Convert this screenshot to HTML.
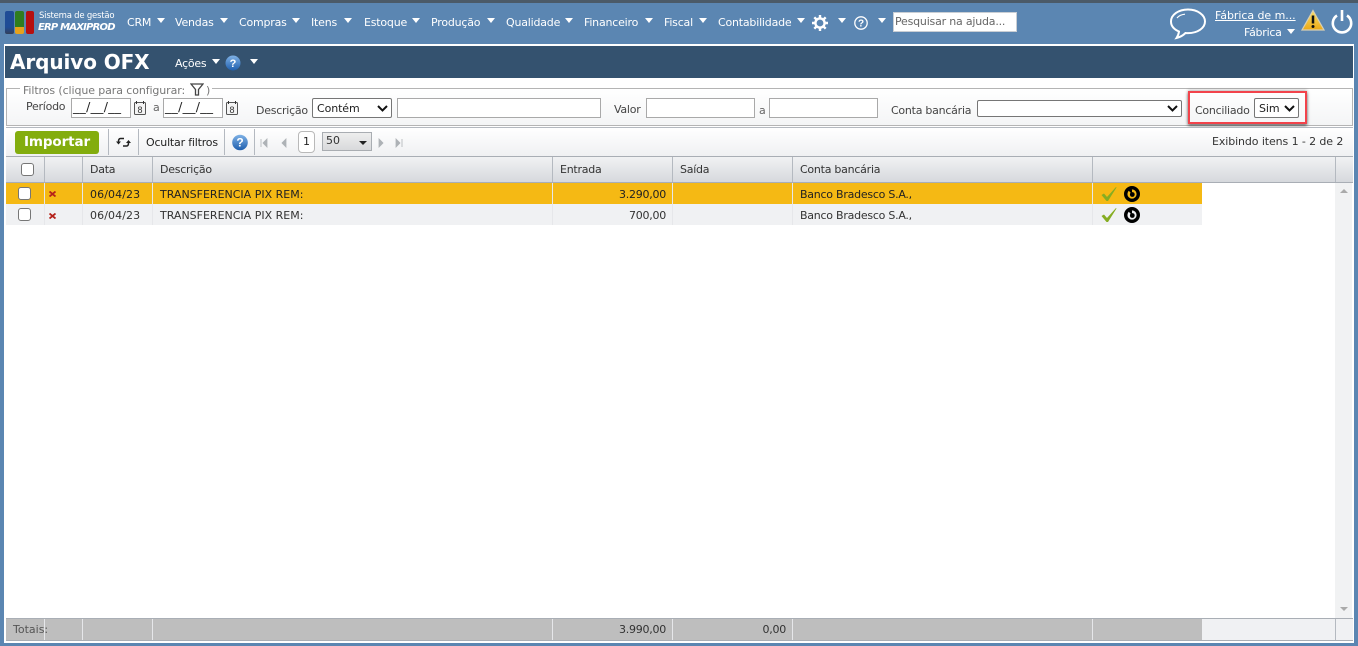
<!DOCTYPE html>
<html lang="pt-BR">
<head>
<meta charset="utf-8">
<title>Arquivo OFX</title>
<style>
html,body{margin:0;padding:0}
body{position:relative;width:1358px;height:646px;overflow:hidden;background:#5b86b2;font-family:"DejaVu Sans","Liberation Sans",sans-serif;font-size:11px;color:#333}
.a{position:absolute}
.t{position:absolute;white-space:nowrap;line-height:14px;letter-spacing:-.25px}
.r{letter-spacing:0;color:#333}
.m{letter-spacing:-.25px;color:#333}
.n{color:#fff;font-size:11px;top:15.500px;letter-spacing:-.2px}
.c{position:absolute;width:0;height:0;border-left:4.500px solid transparent;border-right:4.500px solid transparent;border-top:5px solid #fff}
.box{position:absolute;box-sizing:border-box;background:#fff;border:1px solid #a9a9a9}
.sel{position:absolute;box-sizing:border-box;background:#fff;border:1px solid #767676;border-radius:2px;height:20px;line-height:19px;padding-left:4px;color:#222;letter-spacing:-.1px}
.cb{position:absolute;box-sizing:border-box;width:13px;height:13px;background:#fff;border:1px solid #767676;border-radius:3px}
.v{position:absolute;width:1px;background:#b4b9c0}
.w{position:absolute;width:1px;background:#e6e7ea}
.lab{color:#444}
.d{color:#222;font-size:12.500px;letter-spacing:.3px}
</style>
</head>
<body>
<div class="a" style="left:0;top:0;width:1358px;height:3px;background:#4b5a68"></div>

<!-- logo -->
<div class="a" style="left:5px;top:11px;width:9px;height:23px;background:linear-gradient(#1f4c96 70%,#33405a);border-radius:2px"></div>
<div class="a" style="left:15px;top:11px;width:9px;height:16px;background:#2f7d1e;border-radius:2px 2px 0 0"></div>
<div class="a" style="left:15px;top:27px;width:9px;height:7px;background:#e6a21c;border-radius:0 0 2px 2px"></div>
<div class="a" style="left:26px;top:11px;width:8px;height:23px;background:#b60f0f;border-radius:2px"></div>
<span class="t" style="left:39px;top:8.500px;color:#fff;font-size:8.500px;letter-spacing:-.22px;">Sistema de gestão</span>
<span class="t" style="left:38px;top:21px;color:#fff;font-size:10px;font-style:italic;font-weight:bold;letter-spacing:-.8px;">ERP MAXIPROD</span>

<!-- nav -->
<span class="t n" style="left:127px">CRM</span><i class="c" style="left:157px;top:18px"></i>
<span class="t n" style="left:175px">Vendas</span><i class="c" style="left:220px;top:18px"></i>
<span class="t n" style="left:239px">Compras</span><i class="c" style="left:292px;top:18px"></i>
<span class="t n" style="left:311px">Itens</span><i class="c" style="left:344px;top:18px"></i>
<span class="t n" style="left:364px">Estoque</span><i class="c" style="left:412px;top:18px"></i>
<span class="t n" style="left:431px">Produção</span><i class="c" style="left:487px;top:18px"></i>
<span class="t n" style="left:506px">Qualidade</span><i class="c" style="left:565px;top:18px"></i>
<span class="t n" style="left:584px">Financeiro</span><i class="c" style="left:645px;top:18px"></i>
<span class="t n" style="left:664px">Fiscal</span><i class="c" style="left:699px;top:18px"></i>
<span class="t n" style="left:718px">Contabilidade</span><i class="c" style="left:797px;top:18px"></i>
<svg class="a" style="left:812px;top:15px" width="16" height="16" viewBox="0 0 16 16"><circle cx="8" cy="8" r="4.600" fill="none" stroke="#fff" stroke-width="2.400"/><path d="M8 0v3M8 13v3M0 8h3M13 8h3M2.300 2.300l2.200 2.200M11.500 11.500l2.200 2.200M2.300 13.700l2.200-2.200M11.500 4.500l2.200-2.200" stroke="#fff" stroke-width="2.400"/></svg>
<i class="c" style="left:838px;top:18px"></i>
<svg class="a" style="left:853px;top:15px" width="16" height="16" viewBox="0 0 16 16"><circle cx="8" cy="8" r="6.200" fill="none" stroke="#fff" stroke-width="1.300"/><text x="8" y="11.500" text-anchor="middle" font-size="10" font-weight="bold" fill="#fff" font-family="Liberation Sans">?</text></svg>
<i class="c" style="left:878px;top:18px"></i>
<div class="a" style="left:893px;top:12px;width:124px;height:20px;box-sizing:border-box;background:#fff;border:1px solid #c9ced4"></div>
<span class="t" style="left:895px;top:15px;color:#666;letter-spacing:-.2px">Pesquisar na ajuda...</span>

<!-- right of nav -->
<svg class="a" style="left:1169px;top:7px" width="38" height="34" viewBox="0 0 38 34"><path d="M19 2.500C9.500 2.500 2 7.800 2 14.500c0 4.500 3.300 8 8 10-.3 2.500-1.500 5-2.500 6.500 3.500-.8 6.800-2.800 9-5 .8.100 1.700.100 2.500.100 9.500 0 17-5 17-11.600S28.500 2.500 19 2.500z" fill="none" stroke="#fff" stroke-width="2"/><path d="M8 11c2-2.500 5-3.500 8-3.800" fill="none" stroke="#fff" stroke-width="1.200"/></svg>
<span class="t" style="left:1215px;top:8.500px;color:#fff;text-decoration:underline;letter-spacing:-.05px">Fábrica de m...</span>
<span class="t" style="left:1244px;top:25.500px;color:#fff">Fábrica</span><i class="c" style="left:1287px;top:29px"></i>
<svg class="a" style="left:1301px;top:9px" width="24" height="22" viewBox="0 0 24 22"><defs><linearGradient id="y" x1="0" y1="0" x2="0" y2="1"><stop offset="0" stop-color="#fbe06a"/><stop offset="1" stop-color="#eda916"/></linearGradient></defs><path d="M12 1.500L23 21H1z" fill="url(#y)" stroke="#d8cfb4" stroke-width="1.200"/><path d="M12 6.500v8" stroke="#111" stroke-width="2.500"/><circle cx="12" cy="17.500" r="1.500" fill="#111"/></svg>
<svg class="a" style="left:1330px;top:9px" width="24" height="25" viewBox="0 0 24 25"><path d="M7 6.500a9.200 9.200 0 1 0 10 0" fill="none" stroke="#fff" stroke-width="2.600"/><path d="M12 1v11" stroke="#fff" stroke-width="2.600"/></svg>

<!-- main panel -->
<div class="a" style="left:4px;top:44px;width:1350px;height:599px;background:#fff"></div>
<div class="a" style="left:5px;top:46px;width:1348px;height:32px;background:#34526f"></div>
<span class="t" style="left:10px;top:51px;line-height:22px;color:#fff;font-size:20px;font-weight:bold;letter-spacing:-.1px">Arquivo OFX</span>
<span class="t" style="left:175px;top:56.500px;color:#fff">Ações</span><i class="c" style="left:212px;top:59px"></i>
<svg class="a" style="left:225px;top:55px" width="16" height="16" viewBox="0 0 16 16"><defs><linearGradient id="q" x1="0" y1="0" x2="0" y2="1"><stop offset="0" stop-color="#7fb2e6"/><stop offset="1" stop-color="#1f5fae"/></linearGradient></defs><circle cx="8" cy="8" r="7.500" fill="url(#q)"/><text x="8" y="12" text-anchor="middle" font-size="11" font-weight="bold" fill="#fff" font-family="Liberation Sans">?</text></svg>
<i class="c" style="left:250px;top:59px"></i>

<!-- filters -->
<div class="a" style="left:6px;top:88px;width:1347px;height:38px;box-sizing:border-box;border:1px solid #b4b4b4;background:linear-gradient(#fff,#f4f5f6)"></div>
<div class="a" style="left:20px;top:84px;width:192px;height:10px;background:#fff"></div>
<span class="t" style="left:23px;top:83.500px;color:#777;letter-spacing:-.1px">Filtros (clique para configurar:</span>
<span class="t" style="left:206px;top:83.500px;color:#777">)</span>
<svg class="a" style="left:190px;top:83px" width="14" height="13" viewBox="0 0 14 13"><path d="M1 1h12L8.500 6.500V12h-3V6.500z" fill="none" stroke="#444" stroke-width="1.300"/></svg>
<span class="t lab" style="left:26px;top:100px">Período</span>
<div class="box" style="left:71px;top:98px;width:60px;height:20px"></div><span class="t d" style="left:73px;top:100px">__/__/__</span>
<svg class="a" style="left:133px;top:100px" width="14" height="16" viewBox="0 0 14 16"><rect x="1.500" y="2.500" width="11" height="12" rx="1" fill="#f4f4f4" stroke="#555"/><path d="M3.500 1v3M10.500 1v3" stroke="#333"/><text x="7" y="12.800" text-anchor="middle" font-size="9" fill="#333" font-family="Liberation Sans">8</text></svg>
<span class="t" style="left:153px;top:101px;color:#666">a</span>
<div class="box" style="left:163px;top:98px;width:60px;height:20px"></div><span class="t d" style="left:165px;top:100px">__/__/__</span>
<svg class="a" style="left:225px;top:100px" width="14" height="16" viewBox="0 0 14 16"><rect x="1.500" y="2.500" width="11" height="12" rx="1" fill="#f4f4f4" stroke="#555"/><path d="M3.500 1v3M10.500 1v3" stroke="#333"/><text x="7" y="12.800" text-anchor="middle" font-size="9" fill="#333" font-family="Liberation Sans">8</text></svg>
<span class="t lab" style="left:256px;top:103.500px">Descrição</span>
<div class="sel" style="left:312px;top:98px;width:80px">Contém</div>
<svg class="a" style="left:377px;top:105px" width="11" height="7" viewBox="0 0 11 7"><path d="M1 1l4.500 4.500L10 1" fill="none" stroke="#111" stroke-width="2"/></svg>
<div class="box" style="left:397px;top:98px;width:204px;height:20px"></div>
<span class="t lab" style="left:614px;top:103px">Valor</span>
<div class="box" style="left:646px;top:98px;width:109px;height:20px"></div>
<span class="t" style="left:759px;top:103.500px;color:#666">a</span>
<div class="box" style="left:769px;top:98px;width:109px;height:20px"></div>
<span class="t lab" style="left:891px;top:103.500px">Conta bancária</span>
<div class="sel" style="left:977px;top:100px;width:205px;height:17px"></div>
<svg class="a" style="left:1167px;top:105px" width="11" height="7" viewBox="0 0 11 7"><path d="M1 1l4.500 4.500L10 1" fill="none" stroke="#111" stroke-width="2"/></svg>
<div class="a" style="left:1188px;top:91px;width:119px;height:33px;box-sizing:border-box;border:2.500px solid #f2434b;box-shadow:0 2px 3px rgba(0,0,0,.5),0 -1px 3px rgba(0,0,0,.25)"></div>
<span class="t lab" style="left:1195px;top:103.500px">Conciliado</span>
<div class="sel" style="left:1254px;top:98px;width:45px;height:20px">Sim</div>
<svg class="a" style="left:1284px;top:105px" width="11" height="7" viewBox="0 0 11 7"><path d="M1 1l4.500 4.500L10 1" fill="none" stroke="#111" stroke-width="2"/></svg>

<!-- toolbar -->
<div class="a" style="left:6px;top:127px;width:1347px;height:30px;box-sizing:border-box;border-top:1px solid #b4b9c0;background:linear-gradient(#fff,#eff0f2)"></div>
<div class="a" style="left:15px;top:131px;width:84px;height:23px;background:#83ad0e;border-radius:3px;color:#fff;font-weight:bold;font-size:13.500px;line-height:22px;text-align:center;letter-spacing:-.1px">Importar</div>
<div class="v" style="left:108px;top:129px;height:26px"></div>
<svg class="a" style="left:116px;top:136px" width="15" height="13" viewBox="0 0 15 13"><path d="M8 2.500H4.500C3 2.500 2.500 4 2.500 5.500M7 10h3.500c1.500 0 2-1.500 2-3" fill="none" stroke="#222" stroke-width="1.500"/><path d="M0 5.500h5L2.500 8.500zM10 7h5l-2.500-3z" fill="#222"/></svg>
<div class="v" style="left:138px;top:129px;height:26px"></div>
<span class="t" style="left:146px;top:135.500px;color:#222;letter-spacing:-.2px">Ocultar filtros</span>
<div class="v" style="left:224px;top:129px;height:26px"></div>
<svg class="a" style="left:232px;top:134px" width="16" height="17" viewBox="0 0 16 17"><circle cx="8" cy="8.500" r="7.800" fill="url(#q)"/><text x="8" y="12.700" text-anchor="middle" font-size="12" font-weight="bold" fill="#fff" font-family="Liberation Sans">?</text></svg>
<div class="v" style="left:254px;top:129px;height:26px"></div>
<svg class="a" style="left:260px;top:138px" width="150" height="10" viewBox="0 0 150 10"><path d="M1 1v8M7 1v8L3 5zM26 1v8l-4-4z" fill="#aeb2b6" stroke="#aeb2b6" stroke-width=".8"/><path d="M119 1v8l4-4zM136 1v8l4-4zM142 1v8" fill="#aeb2b6" stroke="#aeb2b6" stroke-width=".8"/></svg>
<div class="a" style="left:298px;top:131px;width:17px;height:22px;box-sizing:border-box;background:#fff;border:1px solid #b9b9b9;border-radius:4px;text-align:center;line-height:20px;color:#222">1</div>
<div class="a" style="left:322px;top:132px;width:50px;height:19px;box-sizing:border-box;background:linear-gradient(#eee,#d8d9db);border:1px solid #a9adb2;line-height:15px;padding-left:3px;color:#333">50</div>
<i class="c" style="left:359px;top:141px;border-top-color:#222;border-left-width:4px;border-right-width:4px;border-top-width:4px"></i>
<span class="t" style="left:1212px;top:134.500px;color:#333;letter-spacing:-.1px">Exibindo itens 1 - 2 de 2</span>

<!-- grid header -->
<div class="a" style="left:6px;top:156px;width:1347px;height:27px;box-sizing:border-box;border-top:1px solid #a9aeb5;border-bottom:1px solid #a9aeb5;background:linear-gradient(#f1f2f3,#d6d9dd)"></div>
<div class="v" style="left:44px;top:157px;height:25px"></div>
<div class="v" style="left:82px;top:157px;height:25px"></div>
<div class="v" style="left:152px;top:157px;height:25px"></div>
<div class="v" style="left:552px;top:157px;height:25px"></div>
<div class="v" style="left:672px;top:157px;height:25px"></div>
<div class="v" style="left:792px;top:157px;height:25px"></div>
<div class="v" style="left:1092px;top:157px;height:25px"></div>
<div class="v" style="left:1335px;top:157px;height:25px"></div>
<div class="cb" style="left:21px;top:163px"></div>
<span class="t" style="left:90px;top:162.500px">Data</span>
<span class="t" style="left:160px;top:162.500px">Descrição</span>
<span class="t" style="left:560px;top:162.500px">Entrada</span>
<span class="t" style="left:680px;top:162.500px">Saída</span>
<span class="t" style="left:800px;top:162.500px">Conta bancária</span>

<!-- rows -->
<div class="a" style="left:6px;top:183px;width:1196px;height:21px;background:#f5b914"></div>
<div class="a" style="left:6px;top:204px;width:1196px;height:21px;background:#f0f1f3"></div>
<div class="w" style="left:44px;top:183px;height:42px"></div>
<div class="w" style="left:82px;top:183px;height:42px"></div>
<div class="w" style="left:152px;top:183px;height:42px"></div>
<div class="w" style="left:552px;top:183px;height:42px"></div>
<div class="w" style="left:672px;top:183px;height:42px"></div>
<div class="w" style="left:792px;top:183px;height:42px"></div>
<div class="w" style="left:1092px;top:183px;height:42px"></div>

<div class="cb" style="left:18px;top:187px"></div>
<svg class="a" style="left:49px;top:191px" width="7" height="6" viewBox="0 0 7 6"><path d="M.5.5l6 5M6.500.5l-6 5" stroke="#b5221a" stroke-width="1.800"/></svg>
<span class="t r" style="left:90px;top:187.500px;color:#222;letter-spacing:.1px">06/04/23</span>
<span class="t r" style="left:160px;top:187.500px;color:#222">TRANSFERENCIA PIX REM:</span>
<span class="t m" style="right:692px;top:187.500px;color:#222">3.290,00</span>
<span class="t m" style="left:800px;top:187.500px;color:#222">Banco Bradesco S.A.,</span>
<svg class="a" style="left:1101px;top:186px" width="16" height="16" viewBox="0 0 16 16"><path d="M.5 9L3 7.500 6 11 15 1l.5.5L7 15H5.500z" fill="#86ad22"/></svg>
<svg class="a" style="left:1124px;top:186px" width="16" height="16" viewBox="0 0 16 16"><circle cx="8" cy="8" r="6.300" fill="none" stroke="#000" stroke-width="3.400"/><circle cx="8.300" cy="8.500" r="2.400" fill="#000"/><path d="M3.500 3.500L8 3.500 8 8z" fill="#000"/></svg>

<div class="cb" style="left:18px;top:208px"></div>
<svg class="a" style="left:49px;top:213px" width="7" height="6" viewBox="0 0 7 6"><path d="M.5.5l6 5M6.500.5l-6 5" stroke="#b5221a" stroke-width="1.800"/></svg>
<span class="t r" style="left:90px;top:208.500px;letter-spacing:.1px">06/04/23</span>
<span class="t r" style="left:160px;top:208.500px">TRANSFERENCIA PIX REM:</span>
<span class="t m" style="right:692px;top:208.500px">700,00</span>
<span class="t m" style="left:800px;top:208.500px">Banco Bradesco S.A.,</span>
<svg class="a" style="left:1101px;top:207px" width="16" height="16" viewBox="0 0 16 16"><path d="M.5 9L3 7.500 6 11 15 1l.5.5L7 15H5.500z" fill="#86ad22"/></svg>
<svg class="a" style="left:1124px;top:207px" width="16" height="16" viewBox="0 0 16 16"><circle cx="8" cy="8" r="6.300" fill="none" stroke="#000" stroke-width="3.400"/><circle cx="8.300" cy="8.500" r="2.400" fill="#000"/><path d="M3.500 3.500L8 3.500 8 8z" fill="#000"/></svg>

<!-- scrollbar -->
<div class="a" style="left:1335px;top:183px;width:17px;height:435px;background:#f1f2f3"></div>
<i class="c" style="left:1340px;top:189px;border-top:0;border-bottom:4px solid #aaa;border-left-width:4px;border-right-width:4px"></i>
<i class="c" style="left:1340px;top:607px;border-top:4px solid #aaa;border-left-width:4px;border-right-width:4px"></i>

<!-- totals -->
<div class="a" style="left:6px;top:618px;width:1347px;height:22px;box-sizing:border-box;border-top:1px solid #a9aeb5;background:#f0f1f3"></div>
<div class="a" style="left:6px;top:619px;width:1196px;height:21px;background:#bebebe"></div>
<div class="w" style="left:44px;top:619px;height:21px"></div>
<div class="w" style="left:82px;top:619px;height:21px"></div>
<div class="w" style="left:152px;top:619px;height:21px"></div>
<div class="w" style="left:552px;top:619px;height:21px"></div>
<div class="w" style="left:672px;top:619px;height:21px"></div>
<div class="w" style="left:792px;top:619px;height:21px"></div>
<div class="w" style="left:1092px;top:619px;height:21px"></div>
<div class="v" style="left:1335px;top:619px;height:21px"></div>
<div class="a" style="left:6px;top:640px;width:1347px;height:1px;background:#a9aeb5"></div>
<span class="t r" style="left:13px;top:622.500px;color:#555">Totais:</span>
<span class="t m" style="right:692px;top:622.500px">3.990,00</span>
<span class="t m" style="right:572px;top:622.500px">0,00</span>
</body>
</html>
